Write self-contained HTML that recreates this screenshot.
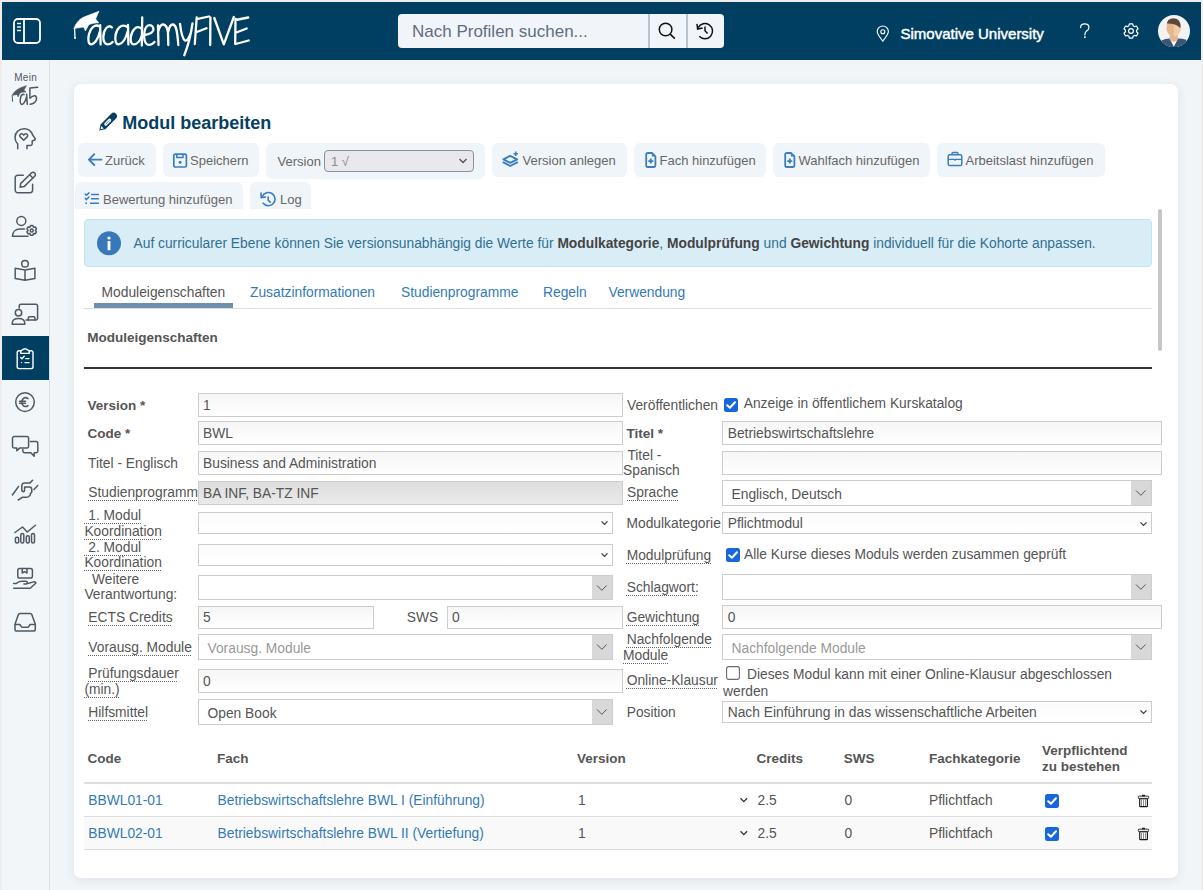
<!DOCTYPE html><html><head><meta charset="utf-8"><style>
html,body{margin:0;padding:0;}
body{width:1203px;height:890px;position:relative;overflow:hidden;background:#efedec;font-family:"Liberation Sans",sans-serif;}
.t{position:absolute;white-space:nowrap;}
.r{position:absolute;box-sizing:border-box;}
.dot{border-bottom:1px dotted #555;}
</style></head><body>
<div class="r" style="left:2px;top:2px;width:1199px;height:888px;background:#f1f5f8;"></div>
<div class="r" style="left:2px;top:2px;width:1199px;height:58px;background:#013f62;"></div>
<div class="r" style="left:2px;top:60px;width:48px;height:830px;background:#f2f6f9;border-right:1px solid #d5e1ec;"></div>
<svg class="r" style="left:13px;top:18px;" width="30" height="28" viewBox="0 0 30 28"><rect x="1" y="1" width="26" height="24" rx="4" fill="none" stroke="#fff" stroke-width="1.8"/><line x1="11" y1="1.5" x2="11" y2="25" stroke="#fff" stroke-width="1.8"/><line x1="4" y1="5.5" x2="8" y2="5.5" stroke="#fff" stroke-width="1.4"/><line x1="4" y1="9" x2="8" y2="9" stroke="#fff" stroke-width="1.4"/><line x1="4" y1="12.5" x2="8" y2="12.5" stroke="#fff" stroke-width="1.4"/></svg>
<svg class="r" style="left:0;top:0" width="260" height="60" viewBox="0 0 260 60"><g fill="none" stroke="#fff" stroke-width="2.3" stroke-linecap="round" stroke-linejoin="round">
<path d="M99.5 26.5 C95 23.5 90.5 28 89 34 C87.5 40 88.5 44.5 91.5 44.3 C95 44 98.5 38 100 31 M100.2 25.2 L100.6 44.6"/>
<path d="M112 27.5 C108 23.5 103.5 30 103.3 37 C103.2 42 105.5 44.6 108 44.4 C110 44.2 111.5 43.3 112.6 42"/>
<path d="M126.5 26.5 C121 23.5 116.5 29 115.5 35.5 C114.8 41 116 44.6 118.7 44.3 C122.5 43.8 126 38 127.8 31 M128 25 L128.4 44.6"/>
<path d="M141.3 28.5 C137 25 132.5 29 131 36 C130 41.5 131.5 44.6 134 44.4 C137.5 44 140.5 40 141.6 36 M142.2 17.4 L141.8 45.5"/>
<path d="M144.5 35 C148 34.5 152.5 33.5 153.3 30 C153.8 26 150.5 24.5 148 25.5 C145 27 144 32 144.2 37.5 C144.5 42.5 146.5 45 149.5 44.8 C151.5 44.6 153.3 43.5 154.5 42"/>
<path d="M158 25.5 L158.5 45 M158.4 31 C159.5 26 161.5 24.3 163.5 24.5 C166 25 167.5 28 168 33 L168.3 45 M168.2 32 C169.2 26.5 171 24.3 173 24.5 C176 25 177.3 30 178.3 45"/>
<path d="M180 24 C181 32 182.5 39 185 40.5 C187 41.5 189 38 191 32 M192.5 23.5 C191 34 188 46 184.3 55.2"/>
<path d="M196.7 17.5 L194.8 44 M196.5 19.2 L209 16.5 M195.5 32.5 L206.5 28.3"/>
<path d="M210.4 17.5 L210.2 45"/>
<path d="M214.3 18 L223.8 44.4 L233.8 17"/>
<path d="M235.5 19 L235.2 44 M235.5 20 L248.2 17.5 M236.3 32.5 L246.7 28.5 M235.5 44 L248.7 40.5"/>
<path d="M74.6 28.5 L75 37.5" stroke-width="1.3"/>
</g>
<path d="M73.8 28.6 C76.5 22 80 18.8 84.5 16.8 L99 11.2 L95.6 19 L98.8 22.8 C94 23 90 23.8 88.6 25 L85.4 31 L83.6 27 Z" fill="#fff" stroke="#fff" stroke-width="0.6" stroke-linejoin="round"/>
<circle cx="75" cy="38" r="1" fill="#fff"/>
</svg>

<div class="r" style="left:398px;top:14px;width:326px;height:34px;background:#f1f5f9;border-radius:4px;"></div>
<div class="r" style="left:648px;top:14px;width:2px;height:34px;background:#b9c4ce;"></div>
<div class="r" style="left:686px;top:14px;width:2px;height:34px;background:#b9c4ce;"></div>
<div class="t" style="left:412px;top:20.61px;font-size:17px;line-height:21px;font-weight:400;color:#5f6e82;letter-spacing:0px;">Nach Profilen suchen...</div>
<svg class="r" style="left:656px;top:19px;" width="22" height="22" viewBox="0 0 22 22"><circle cx="9.6" cy="10.5" r="6.3" fill="none" stroke="#111" stroke-width="1.5"/><line x1="14.2" y1="15.1" x2="18.8" y2="19.6" stroke="#111" stroke-width="1.5"/></svg>
<svg class="r" style="left:694px;top:19px;" width="22" height="24" viewBox="0 0 22 24"><path d="M4.2 8.6 A7.6 7.6 0 1 1 5.3 17.3" fill="none" stroke="#111" stroke-width="1.5"/><path d="M3 4.8 L3.6 10 L8.6 9" fill="none" stroke="#111" stroke-width="1.5"/><path d="M11 7.5 V11.8 L13.6 14.5" fill="none" stroke="#111" stroke-width="1.5"/></svg>
<svg class="r" style="left:875px;top:25px;" width="16" height="18" viewBox="0 0 16 18"><path d="M7.8 16.2 C4 11.5 2.2 9 2.2 6.6 A5.6 5.6 0 0 1 13.4 6.6 C13.4 9 11.6 11.5 7.8 16.2 Z" fill="none" stroke="#fff" stroke-width="1.1"/><circle cx="7.8" cy="6.8" r="2" fill="none" stroke="#fff" stroke-width="1.1"/></svg>
<div class="t" style="left:900.5px;top:24.30px;font-size:15px;line-height:19px;font-weight:400;color:#fff;letter-spacing:0px;-webkit-text-stroke:0.45px #fff;">Simovative University</div>
<svg class="r" style="left:1078px;top:22px;" width="14" height="18" viewBox="0 0 14 18"><path d="M2.6 5.6 Q2.6 1.9 6.8 1.9 Q10.9 1.9 10.9 5.4 Q10.9 7.5 8.6 9 Q6.9 10.2 6.9 12.4 V13" fill="none" stroke="#fff" stroke-width="1.2" stroke-linecap="round"/><circle cx="6.9" cy="15.2" r="0.9" fill="#fff"/></svg>
<svg class="r" style="left:1121px;top:21px" width="20" height="20" viewBox="-10 -10 20 20"><path d="M-2.14 -5.17 L-1.61 -7.22 L1.61 -7.22 L2.14 -5.17 L3.41 -4.44 L5.45 -5.01 L7.06 -2.21 L5.55 -0.73 L5.55 0.73 L7.06 2.21 L5.45 5.01 L3.41 4.44 L2.14 5.17 L1.61 7.22 L-1.61 7.22 L-2.14 5.17 L-3.41 4.44 L-5.45 5.01 L-7.06 2.21 L-5.55 0.73 L-5.55 -0.73 L-7.06 -2.21 L-5.45 -5.01 L-3.41 -4.44 Z" fill="none" stroke="#fff" stroke-width="1.2" stroke-linejoin="round"/><circle cx="0" cy="0" r="2.4" fill="none" stroke="#fff" stroke-width="1.2"/></svg>
<svg class="r" style="left:1155px;top:12px" width="40" height="40" viewBox="0 0 40 40"><defs><clipPath id="av"><circle cx="19" cy="19.1" r="16"/></clipPath></defs>
<circle cx="19" cy="19.1" r="16" fill="#f3f3f3"/>
<g clip-path="url(#av)">
<path d="M5 40 L6.8 28.2 Q11 26.5 14.8 26.6 L19 29 L23 26.6 Q27 26.5 31.2 27.8 L33 40 Z" fill="#3d5673"/>
<path d="M15.2 27.5 L18.8 34.8 L22.6 27.5 L19 29.5 Z" fill="#fff"/>
<path d="M14.7 22.5 H22.8 V27.8 L19 30 L14.7 27.8 Z" fill="#e3b58f"/>
<ellipse cx="18.8" cy="16.5" rx="7.2" ry="7.8" fill="#f3cba6"/>
<path d="M18.8 8.7 A7.2 7.8 0 0 0 18.8 24.3 Z" fill="#e6b78f"/>
<path d="M11.8 13 Q11.6 6.3 18.8 6.2 Q26 6.4 25.6 15.6 L24.6 15.4 Q21 11.6 12.4 11.4 L12 13.5 Z" fill="#5b4a3c"/>
</g></svg>
<div class="r" style="left:2px;top:336px;width:47px;height:44px;background:#013f62;"></div>
<div class="t" style="left:14.2px;top:72.13px;font-size:10px;line-height:12px;font-weight:400;color:#4f5a66;letter-spacing:0.3px;">Mein</div>
<svg class="r" style="left:0;top:0" width="50" height="890" viewBox="0 0 50 890"><path d="M12.2 95.8 L12.5 101" stroke="#4f5964" stroke-width="1" fill="none"/><circle cx="12.5" cy="101" r="0.7" fill="#4f5964"/><path d="M11.8 95.6 Q15 90 20 88 L26.4 85.6 L24 90.2 L26 92 Q21.5 92 20 93 L18.1 97 L17 94.4 Z" fill="#4f5964" stroke="#4f5964" stroke-width="0.5" stroke-linejoin="round"/><path d="M24 94.6 Q21.5 93.5 20.5 98 Q19.5 103 21.5 104.5 Q24.5 104.5 26.5 97 M26.6 94.2 L27.3 104.3" fill="none" stroke="#4f5964" stroke-width="1.5" stroke-linecap="round" stroke-linejoin="round" stroke-width="1.1"/><path d="M37.7 87.3 L29.9 88 L29.9 98.2 Q33 95.3 35.3 95.8 Q37 96.8 36.3 100 Q35 103.5 30.2 104.3" fill="none" stroke="#4f5964" stroke-width="1.5" stroke-linecap="round" stroke-linejoin="round" stroke-width="1.1"/><g transform="translate(14.7 128)"><path d="M3 20.8 V16 C1.2 14.2 0.3 12 0.3 9.5 C0.3 4.2 4.4 0.7 9.5 0.7 C14 0.7 16.8 3.6 18 7 L20.6 10.8 C20.8 11.3 20.5 11.8 20 12 L17.5 13 V15.8 C17.5 16.9 16.8 17.5 15.8 17.5 H12.3 V20.8" fill="none" stroke="#4f5964" stroke-width="1.5" stroke-linecap="round" stroke-linejoin="round"/><path d="M9 12.3 L5.6 8.9 C4.5 7.8 5.1 5.7 6.9 5.7 C7.9 5.7 8.5 6.3 9 7.1 C9.5 6.3 10.1 5.7 11.1 5.7 C12.9 5.7 13.5 7.8 12.4 8.9 Z" fill="none" stroke="#4f5964" stroke-width="1.5" stroke-linecap="round" stroke-linejoin="round"/></g><g transform="translate(14.8 171.8)"><path d="M8.5 3.4 H3 A2.6 2.6 0 0 0 0.4 6 V18.3 A2.6 2.6 0 0 0 3 20.9 H15.2 A2.6 2.6 0 0 0 17.8 18.3 V12.4" fill="none" stroke="#4f5964" stroke-width="1.5" stroke-linecap="round" stroke-linejoin="round"/><path d="M5.3 15.4 L6 11.6 L16.6 1.2 A2.3 2.3 0 0 1 19.9 4.5 L9.3 14.8 Z" fill="none" stroke="#4f5964" stroke-width="1.5" stroke-linecap="round" stroke-linejoin="round"/><path d="M14.9 3 L18.1 6.2" fill="none" stroke="#4f5964" stroke-width="1.5" stroke-linecap="round" stroke-linejoin="round"/></g><circle cx="21.3" cy="220.9" r="4.5" fill="none" stroke="#4f5964" stroke-width="1.5" stroke-linecap="round" stroke-linejoin="round"/><path d="M12.4 236.2 C12.6 232 15.5 229 20 229 H24.5 M12.4 236.2 H28" fill="none" stroke="#4f5964" stroke-width="1.5" stroke-linecap="round" stroke-linejoin="round"/><path d="M30.15 226.93 L30.53 225.54 L32.87 225.54 L33.25 226.93 L33.93 227.33 L35.33 226.96 L36.49 228.98 L35.48 230.00 L35.48 230.80 L36.49 231.82 L35.33 233.84 L33.93 233.47 L33.25 233.87 L32.87 235.26 L30.53 235.26 L30.15 233.87 L29.47 233.47 L28.07 233.84 L26.91 231.82 L27.92 230.80 L27.92 230.00 L26.91 228.98 L28.07 226.96 L29.47 227.33 Z" fill="none" stroke="#4f5964" stroke-width="1.5" stroke-linecap="round" stroke-linejoin="round" stroke-width="1.3"/><circle cx="31.7" cy="230.4" r="1.5" fill="none" stroke="#4f5964" stroke-width="1.5" stroke-linecap="round" stroke-linejoin="round" stroke-width="1.2"/><circle cx="25" cy="263.8" r="3.3" fill="none" stroke="#4f5964" stroke-width="1.5" stroke-linecap="round" stroke-linejoin="round"/><path d="M15.2 268.3 L25 270 L34.9 268.3 V278.5 L25 280.2 L15.2 278.5 Z M25 270 V280.2" fill="none" stroke="#4f5964" stroke-width="1.5" stroke-linecap="round" stroke-linejoin="round"/><path d="M19.2 308 V306 A1.8 1.8 0 0 1 21 304.2 H35.8 A1.8 1.8 0 0 1 37.6 306 V318.3 A1.8 1.8 0 0 1 35.8 320.1 H26" fill="none" stroke="#4f5964" stroke-width="1.5" stroke-linecap="round" stroke-linejoin="round"/><path d="M28.3 320 V317.8 A1 1 0 0 1 29.3 316.8 H33.9 A1 1 0 0 1 34.9 317.8 V320" fill="none" stroke="#4f5964" stroke-width="1.5" stroke-linecap="round" stroke-linejoin="round"/><circle cx="18.5" cy="312.8" r="3.2" fill="none" stroke="#4f5964" stroke-width="1.5" stroke-linecap="round" stroke-linejoin="round"/><path d="M12.2 324.2 V323.5 C12.2 320.5 14.8 318.6 18.5 318.6 C22.2 318.6 24.8 320.5 24.8 323.5 V324.2 Z" fill="none" stroke="#4f5964" stroke-width="1.5" stroke-linecap="round" stroke-linejoin="round"/><path d="M20.8 350.8 H19 A1.8 1.8 0 0 0 17.2 352.6 V366.8 A1.8 1.8 0 0 0 19 368.6 H31.2 A1.8 1.8 0 0 0 33 366.8 V352.6 A1.8 1.8 0 0 0 31.2 350.8 H29.2" fill="none" stroke="#fff" stroke-width="1.4" stroke-linecap="round" stroke-linejoin="round"/><path d="M20.8 353.4 V351.5 Q20.8 350.6 21.8 350.2 L24.2 349 Q25 348.4 25.8 349 L28.2 350.2 Q29.2 350.6 29.2 351.5 V353.4 Z" fill="none" stroke="#fff" stroke-width="1.4" stroke-linecap="round" stroke-linejoin="round"/><path d="M20.7 357.5 L22 358.8 L24.2 356.3" fill="none" stroke="#fff" stroke-width="1.4" stroke-linecap="round" stroke-linejoin="round" stroke-width="1.3"/><path d="M25.8 358.6 H29" fill="none" stroke="#fff" stroke-width="1.4" stroke-linecap="round" stroke-linejoin="round" stroke-width="1.6"/><circle cx="21.5" cy="362.6" r="0.7" fill="#fff"/><path d="M25 362.6 H29" fill="none" stroke="#fff" stroke-width="1.4" stroke-linecap="round" stroke-linejoin="round" stroke-width="1.6"/><circle cx="25" cy="402.1" r="9.3" fill="none" stroke="#4f5964" stroke-width="1.5" stroke-linecap="round" stroke-linejoin="round"/><path d="M28 398.6 A4 4.3 0 1 0 28 405.6 M19.5 401.2 H25.5 M19.5 403.2 H25.5" fill="none" stroke="#4f5964" stroke-width="1.5" stroke-linecap="round" stroke-linejoin="round" stroke-width="1.3"/><path d="M14.3 436.5 H26.8 A1.8 1.8 0 0 1 28.6 438.3 V446.3 A1.8 1.8 0 0 1 26.8 448.1 H19.6 L16.8 450.8 V448.1 H14.3 A1.8 1.8 0 0 1 12.5 446.3 V438.3 A1.8 1.8 0 0 1 14.3 436.5 Z" fill="none" stroke="#4f5964" stroke-width="1.5" stroke-linecap="round" stroke-linejoin="round"/><path d="M30.4 441.5 H36 A1.8 1.8 0 0 1 37.8 443.3 V451 A1.8 1.8 0 0 1 36 452.8 H34.2 V456.3 L30.8 452.8 H24.7 A1.8 1.8 0 0 1 22.9 451 V449.5" fill="none" stroke="#4f5964" stroke-width="1.5" stroke-linecap="round" stroke-linejoin="round"/><path d="M12.4 495 L18.6 486.4 M34 489.4 L37.7 485.6" fill="none" stroke="#4f5964" stroke-width="1.5" stroke-linecap="round" stroke-linejoin="round"/><path d="M32.6 480.3 L30 482.9 H24.6 Q21.8 482.9 21.8 486 V489.6 Q21.8 491.8 23.4 491.8 Q24.6 491.8 24.6 489.6 V487.1 H29.2 Q31.8 487.1 31.8 489.8 V491.5 Q31.8 493 30.4 493.4 V494.6 Q30.4 496 28.8 496.2 Q28.4 497.2 26.8 497.2 H22.6 L18.2 500" fill="none" stroke="#4f5964" stroke-width="1.5" stroke-linecap="round" stroke-linejoin="round"/><path d="M15 532.5 L22.5 527 L27.3 532 L35.4 525.2" fill="none" stroke="#4f5964" stroke-width="1.5" stroke-linecap="round" stroke-linejoin="round"/><rect x="15.4" y="537.2" width="3.3" height="5.8" rx="1.5" fill="none" stroke="#4f5964" stroke-width="1.5" stroke-linecap="round" stroke-linejoin="round" stroke-width="1.3"/><rect x="20.8" y="533.5" width="3.0" height="9.5" rx="1.5" fill="none" stroke="#4f5964" stroke-width="1.5" stroke-linecap="round" stroke-linejoin="round" stroke-width="1.3"/><rect x="26.3" y="535.8" width="3.0" height="7.2" rx="1.5" fill="none" stroke="#4f5964" stroke-width="1.5" stroke-linecap="round" stroke-linejoin="round" stroke-width="1.3"/><rect x="31.5" y="533.5" width="3.0" height="9.5" rx="1.5" fill="none" stroke="#4f5964" stroke-width="1.5" stroke-linecap="round" stroke-linejoin="round" stroke-width="1.3"/><rect x="17.8" y="568.6" width="14.6" height="9.4" rx="1.8" fill="none" stroke="#4f5964" stroke-width="1.5" stroke-linecap="round" stroke-linejoin="round"/><path d="M22.2 568.8 V573 L24.6 571.7 L27 573 V568.8" fill="none" stroke="#4f5964" stroke-width="1.5" stroke-linecap="round" stroke-linejoin="round" stroke-width="1.2"/><path d="M13.6 583.4 H16.3 L19.3 581.6 Q20.2 581.2 21.6 581.2 H26.2 Q27.5 581.4 27.3 583 Q27.1 584 25.8 584 H23.9 M25.8 584 L33.6 581.9 Q35.6 581.6 36 583 L30.2 588.2 H13.6" fill="none" stroke="#4f5964" stroke-width="1.5" stroke-linecap="round" stroke-linejoin="round"/><path d="M20 613.4 H30.2 A1.6 1.6 0 0 1 31.8 614.6 L35.3 624.2 V629.3 A1.8 1.8 0 0 1 33.5 631.1 H16.8 A1.8 1.8 0 0 1 15 629.3 V624.2 L18.4 614.6 A1.6 1.6 0 0 1 20 613.4 Z" fill="none" stroke="#4f5964" stroke-width="1.5" stroke-linecap="round" stroke-linejoin="round"/><path d="M15.2 624.5 H19.9 L21.1 626.4 Q21.6 627.3 22.8 627.3 H27.3 Q28.4 627.3 28.9 626.4 L30.1 624.5 H35.1" fill="none" stroke="#4f5964" stroke-width="1.5" stroke-linecap="round" stroke-linejoin="round"/></svg>
<div class="r" style="left:74px;top:84px;width:1104px;height:794px;background:#fff;border-radius:7px;box-shadow:0 2px 10px rgba(40,70,100,0.10);"></div>
<svg class="r" style="left:94px;top:108px" width="28" height="28" viewBox="0 0 28 28"><g transform="translate(5.3 22.5) rotate(-45)"><path d="M0 0 L5.2 -3.4 H20.2 A3.4 3.4 0 0 1 20.2 3.4 H5.2 Z" fill="#063f62"/><path d="M1.9 0 L4.6 -1.7 V1.7 Z" fill="#fff"/><rect x="7.6" y="-1.5" width="8.6" height="3" rx="1.5" fill="#fff"/><path d="M9 0 H14.8" stroke="#063f62" stroke-width="0.9" stroke-dasharray="1 0.8"/></g></svg>
<div class="t" style="left:122.3px;top:111.76px;font-size:18px;line-height:22px;font-weight:700;color:#063f62;letter-spacing:0px;">Modul bearbeiten</div>
<div class="r" style="left:78px;top:143px;width:78px;height:34px;background:#f0f5f9;border-radius:6px;"></div>
<div class="r" style="left:163px;top:143px;width:96px;height:34px;background:#f0f5f9;border-radius:6px;"></div>
<div class="r" style="left:266px;top:143px;width:219px;height:35.5px;background:#f0f5f9;border-radius:6px;"></div>
<div class="r" style="left:492px;top:143px;width:135px;height:34px;background:#f0f5f9;border-radius:6px;"></div>
<div class="r" style="left:634px;top:143px;width:132px;height:34px;background:#f0f5f9;border-radius:6px;"></div>
<div class="r" style="left:773px;top:143px;width:157px;height:34px;background:#f0f5f9;border-radius:6px;"></div>
<div class="r" style="left:937px;top:143px;width:168px;height:34px;background:#f0f5f9;border-radius:6px;"></div>
<div class="r" style="left:75px;top:182px;width:168px;height:27px;background:#f0f5f9;border-radius:6px;border-radius:6px 6px 0 0;"></div>
<div class="r" style="left:250px;top:182px;width:60.5px;height:27px;background:#f0f5f9;border-radius:6px;border-radius:6px 6px 0 0;"></div>
<div class="t" style="left:105px;top:152.50px;font-size:13px;line-height:16px;font-weight:400;color:#676767;letter-spacing:0px;">Zurück</div>
<div class="t" style="left:190px;top:152.50px;font-size:13px;line-height:16px;font-weight:400;color:#676767;letter-spacing:0px;">Speichern</div>
<div class="t" style="left:277.5px;top:153.50px;font-size:13px;line-height:16px;font-weight:400;color:#676767;letter-spacing:0px;">Version</div>
<div class="t" style="left:522.5px;top:152.50px;font-size:13px;line-height:16px;font-weight:400;color:#676767;letter-spacing:0px;">Version anlegen</div>
<div class="t" style="left:659.5px;top:152.50px;font-size:13px;line-height:16px;font-weight:400;color:#676767;letter-spacing:0px;">Fach hinzufügen</div>
<div class="t" style="left:798.5px;top:152.50px;font-size:13px;line-height:16px;font-weight:400;color:#676767;letter-spacing:0px;">Wahlfach hinzufügen</div>
<div class="t" style="left:965.5px;top:152.50px;font-size:13px;line-height:16px;font-weight:400;color:#676767;letter-spacing:0px;">Arbeitslast hinzufügen</div>
<div class="t" style="left:103px;top:191.50px;font-size:13px;line-height:16px;font-weight:400;color:#676767;letter-spacing:0px;">Bewertung hinzufügen</div>
<div class="t" style="left:280px;top:191.50px;font-size:13px;line-height:16px;font-weight:400;color:#676767;letter-spacing:0px;">Log</div>
<div class="r" style="left:324px;top:150px;width:150px;height:22px;background:#e9e8ed;border:1px solid #8f8f9d;border-radius:4px;"></div>
<div class="t" style="left:331px;top:153.50px;font-size:13px;line-height:16px;font-weight:400;color:#8a8a8a;letter-spacing:0px;">1 √</div>
<svg class="r" style="left:458px;top:157px;" width="10" height="8" viewBox="0 0 10 8"><path d="M1.5 2 L5 5.5 L8.5 2" fill="none" stroke="#555" stroke-width="1.4"/></svg>
<svg class="r" style="left:87px;top:152px;" width="16" height="16" viewBox="0 0 16 16"><path d="M2 7.6 H14.5 M7.3 2.2 L1.9 7.6 L7.3 13" fill="none" stroke="#3b7dc1" stroke-width="1.9" stroke-linecap="round" stroke-linejoin="round"/></svg>
<svg class="r" style="left:172px;top:152px;" width="16" height="16" viewBox="0 0 16 16"><rect x="1.8" y="2.2" width="12.6" height="12.8" rx="1.6" fill="none" stroke="#3b7dc1" stroke-width="1.7"/><path d="M4.8 2.6 V5.6 H11 V2.6" fill="none" stroke="#3b7dc1" stroke-width="1.5"/><circle cx="8.1" cy="10.3" r="1.5" fill="#3b7dc1"/></svg>
<svg class="r" style="left:502px;top:151px;" width="18" height="18" viewBox="0 0 18 18"><path d="M8.2 4.8 L15.2 8.3 L8.2 11.8 L1.4 8.3 Z" fill="none" stroke="#3b7dc1" stroke-width="1.9" stroke-linejoin="round"/><path d="M1.4 11.4 L8.2 15 L15.2 11.4" fill="none" stroke="#3b7dc1" stroke-width="1.9" stroke-linejoin="round" stroke-linecap="round"/><path d="M13.7 0.6 V5 M11.5 2.8 H15.9" stroke="#3b7dc1" stroke-width="1.6"/></svg>
<svg class="r" style="left:644.5px;top:152px;" width="12" height="16" viewBox="0 0 12 16"><path d="M1.2 2.6 Q1.2 1 2.8 1 H7 L10.4 4.4 V13.6 Q10.4 15 9 15 H2.8 Q1.2 15 1.2 13.4 Z" fill="none" stroke="#3b7dc1" stroke-width="1.8" stroke-linejoin="round"/><path d="M6.9 1 V4.6 H10.4 Z" fill="#3b7dc1"/><path d="M5.8 6.6 V11.6 M3.3 9.1 H8.3" stroke="#3b7dc1" stroke-width="1.9"/></svg>
<svg class="r" style="left:783.5px;top:152px;" width="12" height="16" viewBox="0 0 12 16"><path d="M1.2 2.6 Q1.2 1 2.8 1 H7 L10.4 4.4 V13.6 Q10.4 15 9 15 H2.8 Q1.2 15 1.2 13.4 Z" fill="none" stroke="#3b7dc1" stroke-width="1.8" stroke-linejoin="round"/><path d="M6.9 1 V4.6 H10.4 Z" fill="#3b7dc1"/><path d="M5.8 6.6 V11.6 M3.3 9.1 H8.3" stroke="#3b7dc1" stroke-width="1.9"/></svg>
<svg class="r" style="left:947px;top:151px;" width="16" height="16" viewBox="0 0 16 16"><rect x="1.2" y="3.8" width="13.6" height="10.8" rx="1.6" fill="none" stroke="#3b7dc1" stroke-width="1.5"/><path d="M5 3.8 V2.4 Q5 1.5 6 1.5 H10 Q11 1.5 11 2.4 V3.8" fill="none" stroke="#3b7dc1" stroke-width="1.4"/><path d="M1.2 8.4 H14.8" stroke="#3b7dc1" stroke-width="1.3"/><path d="M6.6 8.4 Q8 10.2 9.4 8.4" fill="#3b7dc1" stroke="#3b7dc1" stroke-width="1"/></svg>
<svg class="r" style="left:84px;top:191px;" width="16" height="15" viewBox="0 0 16 15"><path d="M1.2 3 L2.5 4.3 L5 1.7 M1.2 7.3 L2.5 8.6 L5 6" fill="none" stroke="#3b7dc1" stroke-width="1.5" stroke-linecap="round" stroke-linejoin="round"/><circle cx="2.2" cy="12.2" r="0.9" fill="#3b7dc1"/><path d="M7 3.5 H15 M7 7.7 H15 M6 12.3 H15" stroke="#3b7dc1" stroke-width="1.5"/></svg>
<svg class="r" style="left:260px;top:191px;" width="16" height="16" viewBox="0 0 16 16"><path d="M2.3 5.5 A6.6 6.6 0 1 1 3.2 12.2" fill="none" stroke="#3b7dc1" stroke-width="1.6" stroke-linecap="round"/><path d="M1 2 L1.2 6.6 L5.5 6" fill="none" stroke="#3b7dc1" stroke-width="1.6" stroke-linecap="round" stroke-linejoin="round"/><path d="M8.2 6 V9.3 L10.3 11.2" fill="none" stroke="#3b7dc1" stroke-width="1.6" stroke-linecap="round"/></svg>
<div class="r" style="left:1158px;top:209px;width:3.5px;height:142px;background:#c6c6c6;border-radius:2px;"></div>
<div class="r" style="left:84px;top:219px;width:1068px;height:48px;background:#d9edf7;border:1px solid #bce8f1;border-radius:4px;"></div>
<svg class="r" style="left:97px;top:231px" width="25" height="25" viewBox="0 0 25 25"><circle cx="12" cy="12.3" r="12" fill="#3978b8"/><circle cx="12" cy="7" r="1.6" fill="#fff"/><rect x="10.6" y="10" width="2.8" height="9.3" rx="0.4" fill="#fff"/></svg>
<div class="t" style="left:133.5px;top:236.12px;font-size:13.8px;line-height:16px;color:#31708f;">Auf curricularer Ebene können Sie versionsunabhängig die Werte für <b style="color:#444">Modulkategorie</b>, <b style="color:#444">Modulprüfung</b> und <b style="color:#444">Gewichtung</b> individuell für die Kohorte anpassen.</div>
<div class="r" style="left:84px;top:308px;width:1068px;height:1px;background:#dddddd;"></div>
<div class="r" style="left:94px;top:303px;width:139px;height:5px;background:#6f8fac;"></div>
<div class="t" style="left:101.6px;top:283.72px;font-size:13.8px;line-height:17px;font-weight:400;color:#555;letter-spacing:0px;">Moduleigenschaften</div>
<div class="t" style="left:250px;top:283.72px;font-size:13.8px;line-height:17px;font-weight:400;color:#337ab7;letter-spacing:0px;">Zusatzinformationen</div>
<div class="t" style="left:401px;top:283.72px;font-size:13.8px;line-height:17px;font-weight:400;color:#337ab7;letter-spacing:0px;">Studienprogramme</div>
<div class="t" style="left:543px;top:283.72px;font-size:13.8px;line-height:17px;font-weight:400;color:#337ab7;letter-spacing:0px;">Regeln</div>
<div class="t" style="left:608.5px;top:283.72px;font-size:13.8px;line-height:17px;font-weight:400;color:#337ab7;letter-spacing:0px;">Verwendung</div>
<div class="t" style="left:87.2px;top:328.82px;font-size:13.5px;line-height:17px;font-weight:700;color:#555;letter-spacing:0px;">Moduleigenschaften</div>
<div class="r" style="left:84px;top:367px;width:1068px;height:2px;background:#333;"></div>
<div class="t" style="left:87.6px;top:396.82px;font-size:13.5px;line-height:17px;font-weight:700;color:#555;letter-spacing:0px;">Version *</div>
<div class="r" style="left:198px;top:393px;width:425px;height:24px;border:1px solid #cdcdcd;background:linear-gradient(#f6f6f6,#fff);"></div>
<div class="t" style="left:203px;top:396.52px;font-size:13.8px;line-height:17px;font-weight:400;color:#555;letter-spacing:0px;">1</div>
<div class="t" style="left:87.6px;top:424.82px;font-size:13.5px;line-height:17px;font-weight:700;color:#555;letter-spacing:0px;">Code *</div>
<div class="r" style="left:198px;top:421px;width:425px;height:24px;border:1px solid #cdcdcd;background:linear-gradient(#f6f6f6,#fff);"></div>
<div class="t" style="left:203px;top:424.72px;font-size:13.8px;line-height:17px;font-weight:400;color:#555;letter-spacing:0px;">BWL</div>
<div class="t" style="left:88px;top:454.72px;font-size:13.8px;line-height:17px;font-weight:400;color:#555;letter-spacing:0px;">Titel - Englisch</div>
<div class="r" style="left:198px;top:451px;width:425px;height:24px;border:1px solid #cdcdcd;background:linear-gradient(#f6f6f6,#fff);"></div>
<div class="t" style="left:203px;top:454.72px;font-size:13.8px;line-height:17px;font-weight:400;color:#555;letter-spacing:0px;">Business and Administration</div>
<div class="t" style="left:88.3px;top:484.22px;font-size:13.8px;line-height:17px;font-weight:400;color:#555;letter-spacing:0px;text-decoration:underline dotted #666;text-decoration-thickness:1px;text-underline-offset:2.5px;">Studienprogramm</div>
<div class="r" style="left:198px;top:481px;width:425px;height:24px;border:1px solid #cdcdcd;background:linear-gradient(#dedede,#eaeaea);"></div>
<div class="t" style="left:203px;top:485.02px;font-size:13.8px;line-height:17px;font-weight:400;color:#555;letter-spacing:0px;">BA INF, BA-TZ INF</div>
<div class="t" style="left:84.4px;top:506.72px;font-size:13.8px;line-height:17px;font-weight:400;color:#555;letter-spacing:0px;text-decoration:underline dotted #666;text-decoration-thickness:1px;text-underline-offset:2.5px;">&nbsp;1. Modul</div>
<div class="t" style="left:84.4px;top:522.72px;font-size:13.8px;line-height:17px;font-weight:400;color:#555;letter-spacing:0px;text-decoration:underline dotted #666;text-decoration-thickness:1px;text-underline-offset:2.5px;">Koordination</div>
<div class="r" style="left:198px;top:512px;width:415px;height:22px;border:1px solid #cdcdcd;background:linear-gradient(#fbfbfb,#fff);"></div>
<svg class="r" style="left:600px;top:519px;" width="9" height="8" viewBox="0 0 9 8"><path d="M1.5 2.4 L4.5 5.4 L7.5 2.4" fill="none" stroke="#3a3a3a" stroke-width="1.25"/></svg>
<div class="t" style="left:84.4px;top:538.72px;font-size:13.8px;line-height:17px;font-weight:400;color:#555;letter-spacing:0px;text-decoration:underline dotted #666;text-decoration-thickness:1px;text-underline-offset:2.5px;">&nbsp;2. Modul</div>
<div class="t" style="left:84.4px;top:554.22px;font-size:13.8px;line-height:17px;font-weight:400;color:#555;letter-spacing:0px;text-decoration:underline dotted #666;text-decoration-thickness:1px;text-underline-offset:2.5px;">Koordination</div>
<div class="r" style="left:198px;top:544px;width:415px;height:22px;border:1px solid #cdcdcd;background:linear-gradient(#fbfbfb,#fff);"></div>
<svg class="r" style="left:600px;top:551px;" width="9" height="8" viewBox="0 0 9 8"><path d="M1.5 2.4 L4.5 5.4 L7.5 2.4" fill="none" stroke="#3a3a3a" stroke-width="1.25"/></svg>
<div class="t" style="left:92px;top:570.72px;font-size:13.8px;line-height:17px;font-weight:400;color:#555;letter-spacing:0px;">Weitere</div>
<div class="t" style="left:84.4px;top:586.22px;font-size:13.8px;line-height:17px;font-weight:400;color:#555;letter-spacing:0px;">Verantwortung:</div>
<div class="r" style="left:198px;top:575px;width:415px;height:25px;border:1px solid #cdcdcd;background:#fff;"></div>
<div class="r" style="left:592px;top:575px;width:21px;height:25px;background:#d8d8d8;border:1px solid #cdcdcd;border-left:none;"></div>
<svg class="r" style="left:595.5px;top:583.5px;" width="12" height="8" viewBox="0 0 12 8"><path d="M1 1.5 L5.8 6.3 L10.6 1.5" fill="none" stroke="#555" stroke-width="1"/></svg>
<div class="t" style="left:88.3px;top:608.72px;font-size:13.8px;line-height:17px;font-weight:400;color:#555;letter-spacing:0px;text-decoration:underline dotted #666;text-decoration-thickness:1px;text-underline-offset:2.5px;">ECTS Credits</div>
<div class="r" style="left:198px;top:606px;width:176px;height:23px;border:1px solid #cdcdcd;background:linear-gradient(#f6f6f6,#fff);"></div>
<div class="t" style="left:203px;top:608.72px;font-size:13.8px;line-height:17px;font-weight:400;color:#555;letter-spacing:0px;">5</div>
<div class="t" style="left:406.7px;top:608.72px;font-size:13.8px;line-height:17px;font-weight:400;color:#555;letter-spacing:0px;">SWS</div>
<div class="r" style="left:447px;top:606px;width:176px;height:23px;border:1px solid #cdcdcd;background:linear-gradient(#f6f6f6,#fff);"></div>
<div class="t" style="left:452px;top:608.72px;font-size:13.8px;line-height:17px;font-weight:400;color:#555;letter-spacing:0px;">0</div>
<div class="t" style="left:88.3px;top:638.72px;font-size:13.8px;line-height:17px;font-weight:400;color:#555;letter-spacing:0px;text-decoration:underline dotted #666;text-decoration-thickness:1px;text-underline-offset:2.5px;">Vorausg. Module</div>
<div class="r" style="left:198px;top:634px;width:415px;height:26px;border:1px solid #cdcdcd;background:#fff;"></div>
<div class="r" style="left:592px;top:634px;width:21px;height:26px;background:#d8d8d8;border:1px solid #cdcdcd;border-left:none;"></div>
<svg class="r" style="left:595.5px;top:643.0px;" width="12" height="8" viewBox="0 0 12 8"><path d="M1 1.5 L5.8 6.3 L10.6 1.5" fill="none" stroke="#555" stroke-width="1"/></svg>
<div class="t" style="left:207.5px;top:639.92px;font-size:13.8px;line-height:17px;font-weight:400;color:#999;letter-spacing:0px;">Vorausg. Module</div>
<div class="t" style="left:88.3px;top:664.72px;font-size:13.8px;line-height:17px;font-weight:400;color:#555;letter-spacing:0px;text-decoration:underline dotted #666;text-decoration-thickness:1px;text-underline-offset:2.5px;">Prüfungsdauer</div>
<div class="t" style="left:84.4px;top:680.72px;font-size:13.8px;line-height:17px;font-weight:400;color:#555;letter-spacing:0px;text-decoration:underline dotted #666;text-decoration-thickness:1px;text-underline-offset:2.5px;">(min.)</div>
<div class="r" style="left:198px;top:669px;width:425px;height:24px;border:1px solid #cdcdcd;background:linear-gradient(#f6f6f6,#fff);"></div>
<div class="t" style="left:203px;top:672.72px;font-size:13.8px;line-height:17px;font-weight:400;color:#555;letter-spacing:0px;">0</div>
<div class="t" style="left:88.3px;top:703.72px;font-size:13.8px;line-height:17px;font-weight:400;color:#555;letter-spacing:0px;text-decoration:underline dotted #666;text-decoration-thickness:1px;text-underline-offset:2.5px;">Hilfsmittel</div>
<div class="r" style="left:198px;top:699px;width:415px;height:26px;border:1px solid #cdcdcd;background:#fff;"></div>
<div class="r" style="left:592px;top:699px;width:21px;height:26px;background:#d8d8d8;border:1px solid #cdcdcd;border-left:none;"></div>
<svg class="r" style="left:595.5px;top:708.0px;" width="12" height="8" viewBox="0 0 12 8"><path d="M1 1.5 L5.8 6.3 L10.6 1.5" fill="none" stroke="#555" stroke-width="1"/></svg>
<div class="t" style="left:207.5px;top:705.22px;font-size:13.8px;line-height:17px;font-weight:400;color:#555;letter-spacing:0px;">Open Book</div>
<div class="t" style="left:627px;top:396.72px;font-size:13.8px;line-height:17px;font-weight:400;color:#555;letter-spacing:0px;">Veröffentlichen</div>
<svg class="r" style="left:724px;top:398px;" width="14" height="14" viewBox="0 0 14 14"><rect x="0" y="0" width="14" height="14" rx="2.5" fill="#1766dd"/><path d="M3.2 7.2 L5.9 9.8 L11 4.3" fill="none" stroke="#fff" stroke-width="2" stroke-linecap="round" stroke-linejoin="round"/></svg>
<div class="t" style="left:743.7px;top:395.22px;font-size:13.8px;line-height:17px;font-weight:400;color:#555;letter-spacing:0px;">Anzeige in öffentlichem Kurskatalog</div>
<div class="t" style="left:626.5px;top:424.82px;font-size:13.5px;line-height:17px;font-weight:700;color:#555;letter-spacing:0px;">Titel *</div>
<div class="r" style="left:722px;top:421px;width:440px;height:24px;border:1px solid #cdcdcd;background:linear-gradient(#f6f6f6,#fff);"></div>
<div class="t" style="left:727.7px;top:424.72px;font-size:13.8px;line-height:17px;font-weight:400;color:#555;letter-spacing:0px;">Betriebswirtschaftslehre</div>
<div class="t" style="left:627.4px;top:446.72px;font-size:13.8px;line-height:17px;font-weight:400;color:#555;letter-spacing:0px;">Titel -</div>
<div class="t" style="left:623px;top:462.22px;font-size:13.8px;line-height:17px;font-weight:400;color:#555;letter-spacing:0px;">Spanisch</div>
<div class="r" style="left:722px;top:451px;width:440px;height:24px;border:1px solid #cdcdcd;background:linear-gradient(#f6f6f6,#fff);"></div>
<div class="t" style="left:627px;top:484.22px;font-size:13.8px;line-height:17px;font-weight:400;color:#555;letter-spacing:0px;text-decoration:underline dotted #666;text-decoration-thickness:1px;text-underline-offset:2.5px;">Sprache</div>
<div class="r" style="left:722px;top:480px;width:430px;height:26px;border:1px solid #cdcdcd;background:#fff;"></div>
<div class="r" style="left:1131px;top:480px;width:21px;height:26px;background:#d8d8d8;border:1px solid #cdcdcd;border-left:none;"></div>
<svg class="r" style="left:1134.5px;top:489.0px;" width="12" height="8" viewBox="0 0 12 8"><path d="M1 1.5 L5.8 6.3 L10.6 1.5" fill="none" stroke="#555" stroke-width="1"/></svg>
<div class="t" style="left:731.5px;top:485.52px;font-size:13.8px;line-height:17px;font-weight:400;color:#555;letter-spacing:0px;">Englisch, Deutsch</div>
<div class="t" style="left:626.5px;top:514.72px;font-size:13.8px;line-height:17px;font-weight:400;color:#555;letter-spacing:0px;">Modulkategorie</div>
<div class="r" style="left:722px;top:512px;width:430px;height:22px;border:1px solid #cdcdcd;background:linear-gradient(#fbfbfb,#fff);"></div>
<svg class="r" style="left:1139px;top:519.5px;" width="9" height="8" viewBox="0 0 9 8"><path d="M1.5 2.4 L4.5 5.4 L7.5 2.4" fill="none" stroke="#3a3a3a" stroke-width="1.25"/></svg>
<div class="t" style="left:727.7px;top:514.72px;font-size:13.8px;line-height:17px;font-weight:400;color:#555;letter-spacing:0px;">Pflichtmodul</div>
<div class="t" style="left:626.7px;top:546.72px;font-size:13.8px;line-height:17px;font-weight:400;color:#555;letter-spacing:0px;text-decoration:underline dotted #666;text-decoration-thickness:1px;text-underline-offset:2.5px;">Modulprüfung</div>
<svg class="r" style="left:726px;top:548px;" width="14" height="14" viewBox="0 0 14 14"><rect x="0" y="0" width="14" height="14" rx="2.5" fill="#1766dd"/><path d="M3.2 7.2 L5.9 9.8 L11 4.3" fill="none" stroke="#fff" stroke-width="2" stroke-linecap="round" stroke-linejoin="round"/></svg>
<div class="t" style="left:744px;top:546.02px;font-size:13.8px;line-height:17px;font-weight:400;color:#555;letter-spacing:0px;">Alle Kurse dieses Moduls werden zusammen geprüft</div>
<div class="t" style="left:626.7px;top:579.22px;font-size:13.8px;line-height:17px;font-weight:400;color:#555;letter-spacing:0px;text-decoration:underline dotted #666;text-decoration-thickness:1px;text-underline-offset:2.5px;">Schlagwort:</div>
<div class="r" style="left:722px;top:574px;width:430px;height:26px;border:1px solid #cdcdcd;background:#fff;"></div>
<div class="r" style="left:1131px;top:574px;width:21px;height:26px;background:#d8d8d8;border:1px solid #cdcdcd;border-left:none;"></div>
<svg class="r" style="left:1134.5px;top:583.0px;" width="12" height="8" viewBox="0 0 12 8"><path d="M1 1.5 L5.8 6.3 L10.6 1.5" fill="none" stroke="#555" stroke-width="1"/></svg>
<div class="t" style="left:626.7px;top:608.72px;font-size:13.8px;line-height:17px;font-weight:400;color:#555;letter-spacing:0px;text-decoration:underline dotted #666;text-decoration-thickness:1px;text-underline-offset:2.5px;">Gewichtung</div>
<div class="r" style="left:722px;top:605px;width:440px;height:24px;border:1px solid #cdcdcd;background:linear-gradient(#f6f6f6,#fff);"></div>
<div class="t" style="left:727.7px;top:608.72px;font-size:13.8px;line-height:17px;font-weight:400;color:#555;letter-spacing:0px;">0</div>
<div class="t" style="left:626.7px;top:631.22px;font-size:13.8px;line-height:17px;font-weight:400;color:#555;letter-spacing:0px;text-decoration:underline dotted #666;text-decoration-thickness:1px;text-underline-offset:2.5px;">Nachfolgende</div>
<div class="t" style="left:623px;top:646.72px;font-size:13.8px;line-height:17px;font-weight:400;color:#555;letter-spacing:0px;text-decoration:underline dotted #666;text-decoration-thickness:1px;text-underline-offset:2.5px;">Module</div>
<div class="r" style="left:722px;top:634px;width:430px;height:26px;border:1px solid #cdcdcd;background:#fff;"></div>
<div class="r" style="left:1131px;top:634px;width:21px;height:26px;background:#d8d8d8;border:1px solid #cdcdcd;border-left:none;"></div>
<svg class="r" style="left:1134.5px;top:643.0px;" width="12" height="8" viewBox="0 0 12 8"><path d="M1 1.5 L5.8 6.3 L10.6 1.5" fill="none" stroke="#555" stroke-width="1"/></svg>
<div class="t" style="left:731.5px;top:640.02px;font-size:13.8px;line-height:17px;font-weight:400;color:#999;letter-spacing:0px;">Nachfolgende Module</div>
<div class="t" style="left:626.7px;top:672.22px;font-size:13.8px;line-height:17px;font-weight:400;color:#555;letter-spacing:0px;text-decoration:underline dotted #666;text-decoration-thickness:1px;text-underline-offset:2.5px;">Online-Klausur</div>
<svg class="r" style="left:726px;top:666px;" width="14" height="14" viewBox="0 0 14 14"><rect x="0.6" y="0.6" width="12.8" height="12.8" rx="2.2" fill="#fff" stroke="#6b6b7b" stroke-width="1.1"/></svg>
<div class="t" style="left:747px;top:666.22px;font-size:13.8px;line-height:17px;font-weight:400;color:#555;letter-spacing:0px;">Dieses Modul kann mit einer Online-Klausur abgeschlossen</div>
<div class="t" style="left:723px;top:682.72px;font-size:13.8px;line-height:17px;font-weight:400;color:#555;letter-spacing:0px;">werden</div>
<div class="t" style="left:626.7px;top:703.72px;font-size:13.8px;line-height:17px;font-weight:400;color:#555;letter-spacing:0px;">Position</div>
<div class="r" style="left:722px;top:701px;width:430px;height:22px;border:1px solid #cdcdcd;background:linear-gradient(#fbfbfb,#fff);"></div>
<svg class="r" style="left:1139px;top:708px;" width="9" height="8" viewBox="0 0 9 8"><path d="M1.5 2.4 L4.5 5.4 L7.5 2.4" fill="none" stroke="#3a3a3a" stroke-width="1.25"/></svg>
<div class="t" style="left:727.7px;top:703.72px;font-size:13.8px;line-height:17px;font-weight:400;color:#555;letter-spacing:0px;">Nach Einführung in das wissenschaftliche Arbeiten</div>
<div class="t" style="left:87.5px;top:749.82px;font-size:13.5px;line-height:17px;font-weight:700;color:#555;letter-spacing:0px;">Code</div>
<div class="t" style="left:217px;top:749.82px;font-size:13.5px;line-height:17px;font-weight:700;color:#555;letter-spacing:0px;">Fach</div>
<div class="t" style="left:577px;top:749.82px;font-size:13.5px;line-height:17px;font-weight:700;color:#555;letter-spacing:0px;">Version</div>
<div class="t" style="left:756.5px;top:749.82px;font-size:13.5px;line-height:17px;font-weight:700;color:#555;letter-spacing:0px;">Credits</div>
<div class="t" style="left:843.8px;top:749.82px;font-size:13.5px;line-height:17px;font-weight:700;color:#555;letter-spacing:0px;">SWS</div>
<div class="t" style="left:929px;top:749.82px;font-size:13.5px;line-height:17px;font-weight:700;color:#555;letter-spacing:0px;">Fachkategorie</div>
<div class="t" style="left:1042px;top:741.82px;font-size:13.5px;line-height:17px;font-weight:700;color:#555;letter-spacing:0px;">Verpflichtend</div>
<div class="t" style="left:1042px;top:757.82px;font-size:13.5px;line-height:17px;font-weight:700;color:#555;letter-spacing:0px;">zu bestehen</div>
<div class="r" style="left:84px;top:781.5px;width:1068px;height:2.5px;background:#dddddd;"></div>
<div class="r" style="left:84px;top:817px;width:1068px;height:32px;background:#f9f9f9;"></div>
<div class="r" style="left:84px;top:816px;width:1068px;height:1px;background:#dddddd;"></div>
<div class="r" style="left:84px;top:849px;width:1068px;height:1px;background:#dddddd;"></div>
<div class="t" style="left:88.3px;top:791.72px;font-size:13.8px;line-height:17px;font-weight:400;color:#337ab7;letter-spacing:0px;">BBWL01-01</div>
<div class="t" style="left:217.5px;top:791.72px;font-size:13.8px;line-height:17px;font-weight:400;color:#337ab7;letter-spacing:0px;">Betriebswirtschaftslehre BWL I (Einführung)</div>
<div class="t" style="left:578px;top:791.72px;font-size:13.8px;line-height:17px;font-weight:400;color:#555;letter-spacing:0px;">1</div>
<svg class="r" style="left:739px;top:796px;" width="10" height="8" viewBox="0 0 10 8"><path d="M1.5 2.3 L4.8 5.6 L8.1 2.3" fill="none" stroke="#333" stroke-width="1.3"/></svg>
<div class="t" style="left:757.5px;top:791.72px;font-size:13.8px;line-height:17px;font-weight:400;color:#555;letter-spacing:0px;">2.5</div>
<div class="t" style="left:844.5px;top:791.72px;font-size:13.8px;line-height:17px;font-weight:400;color:#555;letter-spacing:0px;">0</div>
<div class="t" style="left:929px;top:791.72px;font-size:13.8px;line-height:17px;font-weight:400;color:#555;letter-spacing:0px;">Pflichtfach</div>
<svg class="r" style="left:1045px;top:793.5px;" width="14" height="14" viewBox="0 0 14 14"><rect x="0" y="0" width="14" height="14" rx="2.5" fill="#1766dd"/><path d="M3.2 7.2 L5.9 9.8 L11 4.3" fill="none" stroke="#fff" stroke-width="2" stroke-linecap="round" stroke-linejoin="round"/></svg>
<svg class="r" style="left:1137px;top:794px;" width="13" height="14" viewBox="0 0 13 14"><rect x="2.7" y="4.6" width="7.7" height="8" rx="0.6" fill="#fff" stroke="#161616" stroke-width="1.15"/><path d="M4.5 5.6 V12 M6.5 5.6 V12 M8.5 5.6 V12" stroke="#7a808a" stroke-width="0.9"/><rect x="1.3" y="2.1" width="10.4" height="2.5" rx="0.9" fill="#e4e8ee" stroke="#222" stroke-width="0.9"/><rect x="5" y="0.7" width="3" height="1.5" rx="0.4" fill="#161616"/></svg>
<div class="t" style="left:88.3px;top:824.72px;font-size:13.8px;line-height:17px;font-weight:400;color:#337ab7;letter-spacing:0px;">BBWL02-01</div>
<div class="t" style="left:217.5px;top:824.72px;font-size:13.8px;line-height:17px;font-weight:400;color:#337ab7;letter-spacing:0px;">Betriebswirtschaftslehre BWL II (Vertiefung)</div>
<div class="t" style="left:578px;top:824.72px;font-size:13.8px;line-height:17px;font-weight:400;color:#555;letter-spacing:0px;">1</div>
<svg class="r" style="left:739px;top:829px;" width="10" height="8" viewBox="0 0 10 8"><path d="M1.5 2.3 L4.8 5.6 L8.1 2.3" fill="none" stroke="#333" stroke-width="1.3"/></svg>
<div class="t" style="left:757.5px;top:824.72px;font-size:13.8px;line-height:17px;font-weight:400;color:#555;letter-spacing:0px;">2.5</div>
<div class="t" style="left:844.5px;top:824.72px;font-size:13.8px;line-height:17px;font-weight:400;color:#555;letter-spacing:0px;">0</div>
<div class="t" style="left:929px;top:824.72px;font-size:13.8px;line-height:17px;font-weight:400;color:#555;letter-spacing:0px;">Pflichtfach</div>
<svg class="r" style="left:1045px;top:826.5px;" width="14" height="14" viewBox="0 0 14 14"><rect x="0" y="0" width="14" height="14" rx="2.5" fill="#1766dd"/><path d="M3.2 7.2 L5.9 9.8 L11 4.3" fill="none" stroke="#fff" stroke-width="2" stroke-linecap="round" stroke-linejoin="round"/></svg>
<svg class="r" style="left:1137px;top:827px;" width="13" height="14" viewBox="0 0 13 14"><rect x="2.7" y="4.6" width="7.7" height="8" rx="0.6" fill="#fff" stroke="#161616" stroke-width="1.15"/><path d="M4.5 5.6 V12 M6.5 5.6 V12 M8.5 5.6 V12" stroke="#7a808a" stroke-width="0.9"/><rect x="1.3" y="2.1" width="10.4" height="2.5" rx="0.9" fill="#e4e8ee" stroke="#222" stroke-width="0.9"/><rect x="5" y="0.7" width="3" height="1.5" rx="0.4" fill="#161616"/></svg>
</body></html>
